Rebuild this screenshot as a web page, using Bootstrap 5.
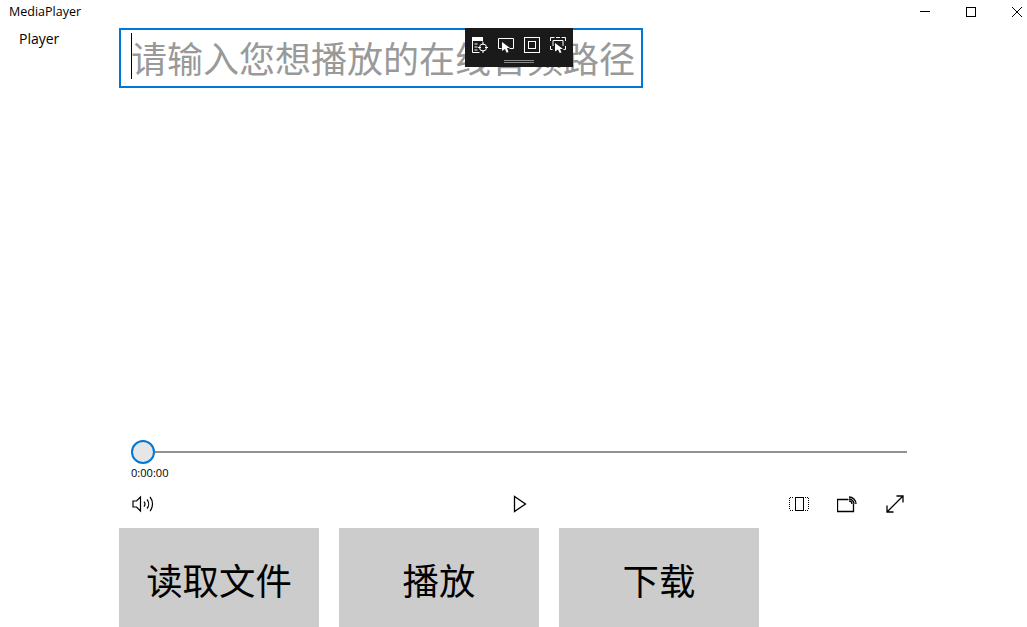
<!DOCTYPE html>
<html lang="zh-CN">
<head>
    <meta charset="UTF-8">
    <meta name="viewport" content="width=device-width, initial-scale=1.0">
    <title>MediaPlayer</title>
    <link href="https://cdn.jsdelivr.net/npm/bootstrap@5.3.0/dist/css/bootstrap.min.css" rel="stylesheet">
    <style>
        html, body {
            height: 627px;
            overflow: hidden;
            background: #fff;
        }
        body {
            font-family: "Open Sans", "Noto Sans CJK SC", sans-serif;
            color: #000;
        }
        svg {
            display: block;
        }
        .title-bar {
            height: 24px;
            padding-left: 9px;
            font-size: 12.5px;
            line-height: 24px;
        }
        .win-btns {
            margin-right: -13px;
        }
        .win-btn {
            width: 46px;
            height: 24px;
        }
        .side-col {
            width: 119px;
            padding-left: 19px;
            font-size: 14px;
            line-height: 20px;
            padding-top: 5px;
        }
        .main-col {
            width: 908px;
        }
        .url-wrap {
            width: 524px;
            height: 60px;
            margin-top: 4px;
        }
        .url-input {
            width: 100%;
            height: 100%;
            border: 2px solid #0078d7;
            border-radius: 0;
            padding: 5px 0 0 10px;
            font-family: "Liberation Sans", "Noto Sans CJK SC", sans-serif;
            font-size: 36px;
            outline: none;
        }
        .url-input::placeholder {
            color: #999;
            opacity: 1;
        }
        .fake-caret {
            position: absolute;
            left: 12px;
            top: 5px;
            width: 1px;
            height: 46px;
            background: #000;
        }
        .float-bar {
            position: absolute;
            left: 346px;
            top: 0;
            width: 108px;
            height: 39px;
            background: #1a1a1a;
            padding: 9px 0 0 7px;
        }
        .float-bar svg + svg {
            margin-left: 10px;
        }
        .grip {
            position: absolute;
            left: 39px;
            top: 32px;
            width: 30px;
            height: 3px;
            border-top: 1px solid #8a8a8a;
            border-bottom: 1px solid #8a8a8a;
        }
        .video-area {
            height: 352px;
        }
        .seek-row {
            width: 776px;
            margin-left: 12px;
            height: 24px;
        }
        .seek-thumb {
            width: 24px;
            height: 24px;
            border-radius: 50%;
            border: 2px solid #0078d7;
            background: #e6e6e6;
        }
        .seek-track {
            height: 2px;
            background: #929292;
        }
        .time-text {
            margin-left: 12px;
            font-size: 11.1px;
            line-height: 18px;
            height: 18px;
        }
        .ctrl-row {
            width: 788px;
            height: 44px;
            margin-top: 2px;
            padding-bottom: 4px;
        }
        .ctrl-left {
            width: 394px;
            padding-left: 13px;
        }
        .ctrl-right {
            gap: 28px;
            padding-right: 2px;
        }
        .big-btn {
            width: 200px;
            height: 99px;
            background: #ccc;
            border: 0;
            border-radius: 0;
            color: #000;
            font-family: "Liberation Sans", "Noto Sans CJK SC", sans-serif;
            font-size: 36.4px;
            padding: 11px 0 0;
        }
        .btn-row {
            gap: 20px;
        }
    </style>
</head>
<body>
    <div class="title-bar d-flex justify-content-between">
        <span>MediaPlayer</span>
        <div class="d-flex win-btns">
            <div class="win-btn d-flex align-items-center justify-content-center">
                <svg width="10" height="10" shape-rendering="crispEdges"><rect x="0" y="4" width="10" height="1" fill="#000"/></svg>
            </div>
            <div class="win-btn d-flex align-items-center justify-content-center">
                <svg width="10" height="10" shape-rendering="crispEdges"><rect x=".5" y=".5" width="9" height="9" fill="none" stroke="#000"/></svg>
            </div>
            <div class="win-btn d-flex align-items-center justify-content-center">
                <svg width="10" height="10"><path d="M0 0L10 10M10 0L0 10" stroke="#000" stroke-width="1"/></svg>
            </div>
        </div>
    </div>
    <div class="d-flex">
        <div class="side-col">Player</div>
        <div class="main-col">
            <div class="url-wrap position-relative">
                <input class="url-input" type="text" placeholder="请输入您想播放的在线音频路径">
                <div class="fake-caret"></div>
                <div class="float-bar d-flex">
                    <svg width="16" height="16" viewBox="0 0 16 16" fill="none" stroke="#fff"><path d="M.5 .5v15h7M10.500 .5v4"/><rect x=".5" y=".5" width="10" height="3" fill="#fff"/><path d="M2.500 7h3M2.500 10h3M2.500 13h3"/><circle cx="11" cy="10.500" r="3.500"/><path d="M11 5v3M11 13v3M6 10.500h3M13 10.500h3"/></svg>
                    <svg width="16" height="16" viewBox="0 0 16 16" fill="none" stroke="#fff"><path d="M3.500 11.500h-3v-10h15v10h-4"/><path d="M4 5l8 6h-3l1.500 4-1.800.8L7 12l-3 2z" fill="#fff" stroke="none"/></svg>
                    <svg width="16" height="16" viewBox="0 0 16 16" fill="none" stroke="#fff"><rect x=".5" y=".5" width="15" height="15"/><rect x="4.500" y="4.500" width="7" height="7"/></svg>
                    <svg width="16" height="16" viewBox="0 0 16 16" fill="none" stroke="#fff"><path d="M.5 4V.500h4M11.500 .5h4V4M.5 9v3.500h2M15.500 9v3.500h-2M6 .5h4M3 9V3.500h10V9"/><path d="M5 6l8 6h-3l1.500 3.500-1.800.5L8 12.500l-3 2z" fill="#fff" stroke="none"/></svg>
                    <div class="grip"></div>
                </div>
            </div>
            <div class="video-area"></div>
            <div class="seek-row d-flex align-items-center">
                <div class="seek-thumb flex-shrink-0"></div>
                <div class="seek-track flex-grow-1"></div>
            </div>
            <div class="time-text">0:00:00</div>
            <div class="ctrl-row d-flex align-items-center">
                <div class="ctrl-left">
                    <svg width="22" height="18" viewBox="0 0 22 18" fill="none" stroke="#000" stroke-width="1.200"><path d="M1 6h3.500L8.500 2v14l-4-4H1z"/><path d="M12 6.500a4 4 0 0 1 0 5M15 4.500a7 7 0 0 1 0 9M18 2a11 11 0 0 1 0 14"/></svg>
                </div>
                <svg width="14" height="18" viewBox="0 0 14 18" fill="none" stroke="#000" stroke-width="1.300"><path d="M1.500 1.500v15L12.500 9z"/></svg>
                <div class="ctrl-right d-flex align-items-center ms-auto">
                    <svg width="20" height="16" viewBox="0 0 20 16" fill="none" stroke="#000" shape-rendering="crispEdges"><rect x="6.500" y="1.500" width="8" height="13"/><path d="M1 1.500h3M1 14.500h3M16 1.500h3M16 14.500h3M.5 2v12M19.500 2v12" stroke-dasharray="1 1"/></svg>
                    <svg width="20" height="17" viewBox="0 0 20 17" fill="none" stroke="#000" stroke-width="1.300"><path d="M11.500 3.500H.5v12h16V8"/><path d="M12 5a3 3 0 0 1 3 3M12 3a5 5 0 0 1 5 5M12 1a7 7 0 0 1 7 7"/></svg>
                    <svg width="20" height="20" viewBox="0 0 20 20" fill="none" stroke="#000" stroke-width="1.300"><path d="M2 18L18 2M11.500 2H18v6.500M2 11.500V18h6.500"/></svg>
                </div>
            </div>
            <div class="d-flex btn-row">
                <button class="btn big-btn" type="button">读取文件</button>
                <button class="btn big-btn" type="button">播放</button>
                <button class="btn big-btn" type="button">下载</button>
            </div>
        </div>
    </div>
    <script src="https://cdn.jsdelivr.net/npm/bootstrap@5.3.0/dist/js/bootstrap.bundle.min.js"></script>
</body>
</html>
